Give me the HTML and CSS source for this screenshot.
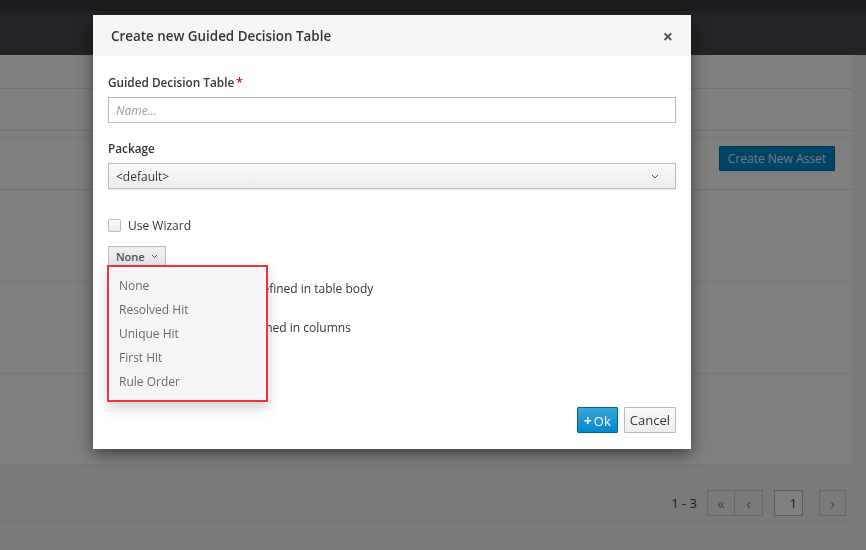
FILE: index.html
```html
<!DOCTYPE html>
<html lang="en">
<head>
    <meta charset="UTF-8">
    <title>Create new Guided Decision Table</title>
    <link rel="stylesheet" href="styles.css">
</head>
<body>
    <div class="masthead"></div>
    <div class="navbar"></div>

    <div class="page">
        <div class="main">
            <div class="crumbs"></div>
            <div class="subbar"></div>

            <div class="panel">
                <div class="toolbar">
                    <button class="btn btn-asset">Create New Asset</button>
                </div>
                <div class="list-row"></div>
                <div class="list-row"></div>
                <div class="list-row last"></div>
                <div class="pager">
                    <span class="pager-count">1 - 3</span>
                    <div class="pager-group">
                        <button class="pager-btn">&laquo;</button>
                        <button class="pager-btn">&lsaquo;</button>
                    </div>
                    <input class="pager-page" type="text" value="1">
                    <button class="pager-btn single">&rsaquo;</button>
                </div>
            </div>
        </div>
        <div class="side"></div>
    </div>

    <div class="backdrop"></div>

    <div class="modal">
        <div class="modal-header">
            <div class="modal-title">Create new Guided Decision Table</div>
            <span class="modal-close">&times;</span>
        </div>
        <div class="modal-body">
            <div class="form-group">
                <label class="form-label">Guided Decision Table<span class="required">*</span></label>
                <input class="form-control" type="text" placeholder="Name...">
            </div>
            <div class="form-group">
                <label class="form-label">Package</label>
                <div class="select">
                    <span>&lt;default&gt;</span>
                    <svg class="chevron" width="8" height="5" viewBox="0 0 8 5"><path d="M1 1 L4 4 L7 1" fill="none" stroke="#555" stroke-width="1"/></svg>
                </div>
            </div>

            <label class="check">
                <span class="check-box"></span>
                Use Wizard
            </label>

            <div class="dropdown">
                <button class="btn-drop">None
                    <svg width="7" height="5" viewBox="0 0 7 5"><path d="M1 1 L3.5 3.5 L6 1" fill="none" stroke="#555" stroke-width="1"/></svg>
                </button>
                <ul class="dropdown-menu">
                    <li>None</li>
                    <li>Resolved Hit</li>
                    <li>Unique Hit</li>
                    <li>First Hit</li>
                    <li>Rule Order</li>
                </ul>
            </div>

            <div class="radio-list">
                <label class="radio"><span class="radio-dot"></span>Extended entry: values defined in table body</label>
                <label class="radio"><span class="radio-dot"></span>Limited entry: values defined in columns</label>
            </div>

            <div class="modal-footer">
                <button class="btn btn-primary"><b>+</b>Ok</button>
                <button class="btn btn-default">Cancel</button>
            </div>
        </div>
    </div>
</body>
</html>
```

FILE: styles.css
```css
body, html {
    margin: 0;
    padding: 0;
    height: 100%;
    font-family: "Open Sans", "Liberation Sans", sans-serif;
    font-size: 12px;
    color: #363636;
    background-color: #f5f5f5;
    overflow: hidden;
}

/* background page */
.masthead {
    height: 12px;
    background-color: #383c40;
}

.navbar {
    height: 43px;
    background-color: #42474c;
}

.page {
    display: flex;
}

.main {
    width: 852px;
    background-color: #fff;
}

.side {
    flex-grow: 1;
    background-color: #f5f5f5;
}

.crumbs {
    height: 33px;
    border-bottom: 1px solid #e6e6e6;
}

.subbar {
    height: 41px;
    border-bottom: 1px solid #e6e6e6;
}

.panel {
    margin-top: 6px;
    border-top: 1px solid #f0f0f0;
}

.toolbar {
    height: 43px;
    display: flex;
    align-items: flex-start;
    justify-content: flex-end;
    padding: 8px 17px 0 0;
    border-bottom: 1px solid #e0e0e0;
}

.list-row {
    height: 91px;
    border-bottom: 1px solid #ececec;
}

.list-row.last {
    height: 90px;
}

.pager {
    height: 51px;
    background-color: #f5f5f5;
    border-bottom: 1px solid #e8e8e8;
    display: flex;
    align-items: flex-end;
    justify-content: flex-end;
    padding: 0 6px 4px 0;
}

.pager-count {
    font-size: 13px;
    margin-right: 10px;
    line-height: 26px;
}

.pager-group {
    display: flex;
    margin-right: 11px;
}

.pager-btn {
    width: 28px;
    height: 26px;
    border: 1px solid #d1d1d1;
    background-color: #f5f5f5;
    color: #8b8d8f;
    font-size: 15px;
    padding: 0;
    font-family: inherit;
}

.pager-group .pager-btn + .pager-btn {
    border-left: none;
}

.pager-page {
    width: 29px;
    height: 26px;
    box-sizing: border-box;
    border: 1px solid #bbb;
    text-align: right;
    padding: 0 5px;
    font-family: inherit;
    font-size: 13px;
    color: #363636;
    margin-right: 16px;
    background: #fff;
}

.pager-btn.single {
    width: 27px;
}

.btn {
    font-family: inherit;
    font-size: 13px;
    border-radius: 1px;
    cursor: pointer;
    height: 26px;
    padding: 0 6px;
}

.btn-asset {
    background-color: #0088ce;
    border: 1px solid #00659c;
    color: #e6eef3;
    height: 25px;
    font-size: 12px;
    padding: 0 8px;
}

/* overlay */
.backdrop {
    position: fixed;
    top: 0;
    left: 0;
    right: 0;
    bottom: 0;
    background-color: rgba(0, 0, 0, 0.5);
}

.modal {
    position: fixed;
    top: 15px;
    left: 93px;
    width: 598px;
    background-color: #fff;
    box-shadow: 0 5px 15px rgba(0, 0, 0, 0.5);
}

.modal-header {
    height: 41px;
    background-color: #f5f5f5;
    display: flex;
    align-items: center;
    justify-content: space-between;
    padding: 0 18px;
}

.modal-title {
    font-size: 13.4px;
    font-weight: 600;
    color: #363636;
}

.modal-close {
    font-size: 18px;
    font-weight: 700;
    color: #4d5258;
    line-height: 1;
}

.modal-body {
    padding: 17px 15px 16px 15px;
}

.form-group {
    margin-bottom: 16px;
}

.form-label {
    display: block;
    font-weight: 600;
    font-size: 11.8px;
    line-height: 18px;
    margin-bottom: 6px;
}

.required {
    color: #c00;
    margin-left: 2px;
}

.form-control {
    display: block;
    width: 100%;
    height: 26px;
    box-sizing: border-box;
    border: 1px solid #bbb;
    padding: 0 7px;
    font-family: inherit;
    font-size: 12px;
}

.form-control::placeholder {
    color: #999;
    font-style: italic;
}

.select {
    height: 26px;
    box-sizing: border-box;
    border: 1px solid #bbb;
    background: linear-gradient(#fafafa, #ededed);
    box-shadow: 0 1px 1px rgba(3, 3, 3, 0.08);
    display: flex;
    align-items: center;
    justify-content: space-between;
    padding: 0 16px 0 7px;
}

.check {
    display: flex;
    align-items: center;
    height: 18px;
    margin-top: 27px;
}

.check-box {
    width: 11px;
    height: 11px;
    border: 1px solid #bbb;
    border-radius: 2px;
    background: linear-gradient(#fafafa, #ededed);
    margin-right: 7px;
}

.dropdown {
    position: relative;
    margin-top: 12px;
}

.btn-drop {
    height: 20px;
    padding: 0 7px 0 7px;
    border: 1px solid #bbb;
    border-bottom: none;
    background: linear-gradient(#f0f0f0, #e6e6e6);
    font-family: inherit;
    font-size: 11px;
    font-weight: 600;
    color: #4d5258;
    display: flex;
    align-items: center;
    gap: 6px;
}

.dropdown-menu {
    position: absolute;
    top: 19px;
    left: -1px;
    width: 157px;
    margin: 0;
    padding: 7px 0 6px 0;
    list-style: none;
    background-color: #f5f5f5;
    border: 2px solid #e8363a;
    box-shadow: 0 6px 12px rgba(0, 0, 0, 0.18);
    z-index: 2;
}

.dropdown-menu li {
    line-height: 24px;
    padding: 0 10px;
    color: #6a6a6a;
}

.radio-list {
    margin-top: 13px;
}

.radio {
    display: flex;
    align-items: center;
    height: 18px;
    margin-bottom: 21px;
}

.radio-dot {
    width: 11px;
    height: 11px;
    border: 1px solid #bbb;
    border-radius: 50%;
    margin-right: 4px;
}

.modal-footer {
    display: flex;
    justify-content: flex-end;
    gap: 6px;
    margin-top: 71px;
}

.btn-primary {
    background: linear-gradient(#39a5dc, #0088ce);
    border: 1px solid #00659c;
    color: #fff;
    padding: 0 6px;
}

.btn-primary b {
    margin-right: 2px;
    font-size: 14px;
}

.btn-default {
    background: linear-gradient(#fafafa, #ededed);
    border: 1px solid #bbb;
    color: #363636;
    padding: 0 5px;
}
```
